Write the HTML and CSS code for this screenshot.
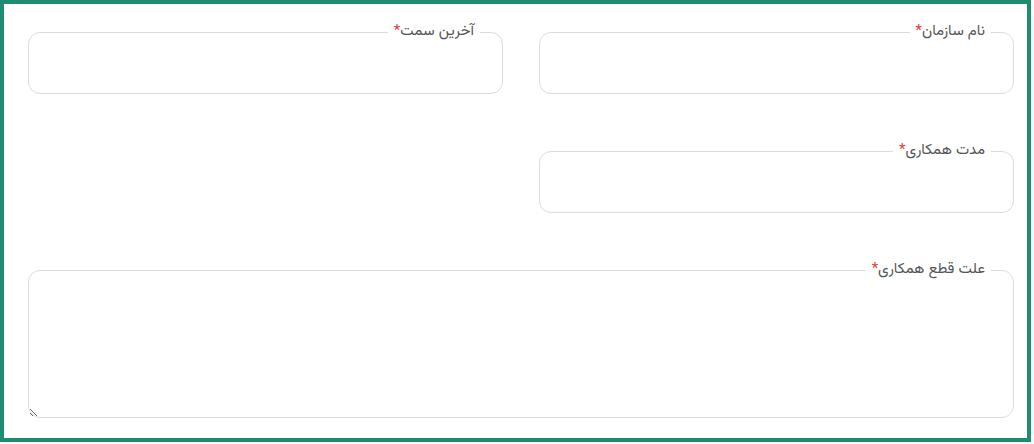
FILE: index.html
```html
<!DOCTYPE html>
<html lang="fa">
<head>
    <meta charset="UTF-8">
    <meta name="viewport" content="width=device-width, initial-scale=1.0">
    <title>سوابق شغلی</title>
    <link rel="stylesheet" href="styles.css">
</head>
<body>
    <div class="card">
        <form class="form-grid" dir="rtl">
            <fieldset class="field">
                <legend>نام سازمان<span class="req">*</span></legend>
                <input type="text" name="org" />
            </fieldset>
            <fieldset class="field">
                <legend>آخرین سمت<span class="req">*</span></legend>
                <input type="text" name="position" />
            </fieldset>
            <fieldset class="field">
                <legend>مدت همکاری<span class="req">*</span></legend>
                <input type="text" name="duration" />
            </fieldset>
            <fieldset class="field field-wide">
                <legend>علت قطع همکاری<span class="req">*</span></legend>
                <textarea name="reason"></textarea>
            </fieldset>
        </form>
    </div>
</body>
</html>
```

FILE: styles.css
```css
body {
    margin: 0;
    background: #fff;
    font-family: 'Vazirmatn', 'Noto Sans Arabic', 'DejaVu Sans', sans-serif;
}

.card {
    width: 1031px;
    height: 442px;
    box-sizing: border-box;
    border: 4px solid #1f8b70;
    background: #fff;
}

.form-grid {
    display: grid;
    grid-template-columns: 1fr 1fr;
    column-gap: 36px;
    row-gap: 47px;
    padding: 18px 13px 0 24px;
    margin: 0;
}

.field {
    margin: 0;
    padding: 0;
    border: 1px solid #dcdcdc;
    border-radius: 12px;
    min-width: 0;
}

.field legend {
    font-size: 15px;
    line-height: 20px;
    color: #555;
    padding: 0 6px;
    margin-right: 22px;
}

.req {
    color: #e53935;
}

.field input {
    display: block;
    width: 100%;
    height: 51px;
    box-sizing: border-box;
    border: none;
    background: transparent;
    padding: 0 14px;
    font-family: inherit;
    font-size: 14px;
    outline: none;
}

.field-wide {
    grid-column: 1 / span 2;
}

.field textarea {
    display: block;
    width: 100%;
    height: 137px;
    box-sizing: border-box;
    border: none;
    background: transparent;
    padding: 8px 14px;
    font-family: inherit;
    font-size: 14px;
    resize: vertical;
    outline: none;
    border-radius: 0 0 12px 12px;
}
```
